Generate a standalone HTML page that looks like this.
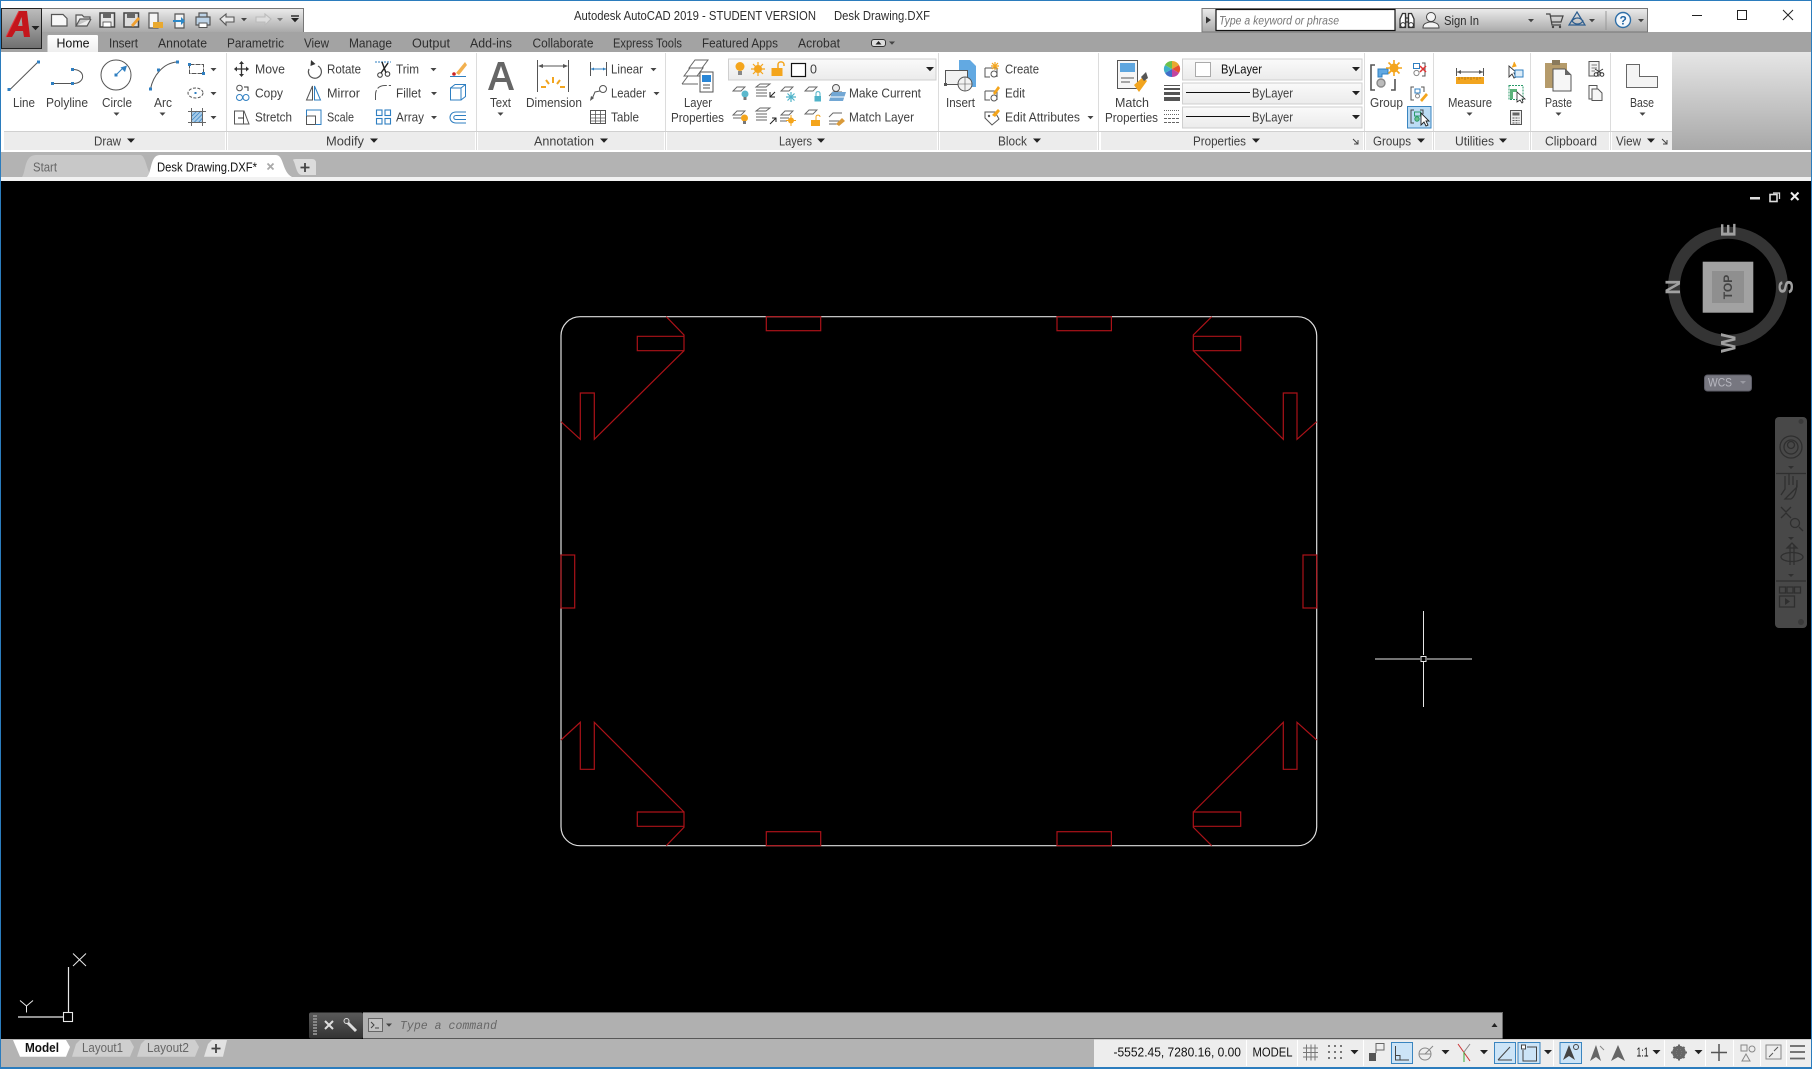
<!DOCTYPE html>
<html><head><meta charset="utf-8"><title>AutoCAD</title>
<style>
html,body{margin:0;padding:0;background:#000;width:1812px;height:1069px;overflow:hidden}
svg{display:block}
text{font-family:"Liberation Sans",sans-serif;font-size:12.5px;fill:#3f3f3f}
.t{fill:#2e2e2e}
.k{fill:#111}
.ic{fill:none;stroke:#555;stroke-width:1.2}
.bl{fill:none;stroke:#2f7fc1;stroke-width:1.2}
</style></head><body>
<svg width="1812" height="1069" viewBox="0 0 1812 1069" xmlns="http://www.w3.org/2000/svg">
<defs>
<linearGradient id="g1" x1="0" y1="0" x2="0" y2="1"><stop offset="0" stop-color="#ececec"/><stop offset="1" stop-color="#a9a9a9"/></linearGradient>
<linearGradient id="g2" x1="0" y1="0" x2="0" y2="1"><stop offset="0" stop-color="#bdbdbd"/><stop offset="1" stop-color="#6f6f6f"/></linearGradient>
<linearGradient id="g3" x1="0" y1="0" x2="0" y2="1"><stop offset="0" stop-color="#ffffff"/><stop offset="1" stop-color="#efefef"/></linearGradient>
<linearGradient id="g4" x1="0" y1="0" x2="0" y2="1"><stop offset="0" stop-color="#e6e6e6"/><stop offset="1" stop-color="#a8a8a8"/></linearGradient>
<linearGradient id="g5" x1="0" y1="0" x2="0" y2="1"><stop offset="0" stop-color="#fafafa"/><stop offset="1" stop-color="#ebebeb"/></linearGradient>
<linearGradient id="g6" x1="0" y1="0" x2="0" y2="1"><stop offset="0" stop-color="#5a5a5a"/><stop offset="1" stop-color="#333"/></linearGradient>
<path id="a" d="M-3 -1.5H3L0 1.7Z" fill="#444"/>
<path id="ab" d="M-4 -2H4L0 2.2Z" fill="#222"/>
</defs>

<!-- base -->
<rect width="1812" height="1069" fill="#000"/>
<rect x="0" y="0" width="1812" height="32" fill="#fff"/>
<rect x="0" y="32" width="1812" height="20" fill="#a3a3a3"/>
<rect x="0" y="52" width="1812" height="100" fill="#fff"/>
<rect x="1672" y="52" width="139" height="98" fill="url(#g4)"/>
<rect x="0" y="152" width="1812" height="25" fill="#b3b3b3"/>
<rect x="0" y="177" width="1812" height="4" fill="#f2f2f2"/>
<rect x="0" y="0" width="1812" height="1" fill="#2b7cbd"/>

<!-- panel title rows -->
<g fill="#ececec">
<rect x="4" y="132" width="221" height="18"/><rect x="228" y="132" width="247" height="18"/>
<rect x="478" y="132" width="186" height="18"/><rect x="667" y="132" width="270" height="18"/>
<rect x="940" y="132" width="157" height="18"/><rect x="1101" y="132" width="262" height="18"/>
<rect x="1366" y="132" width="66" height="18"/><rect x="1435" y="132" width="94" height="18"/>
<rect x="1532" y="132" width="77" height="18"/><rect x="1612" y="132" width="60" height="18"/>
</g>
<g stroke="#dcdcdc" stroke-width="1">
<path d="M226.5 53V150M476.5 53V150M665.5 53V150M938.5 53V150M1098.5 53V150M1364.5 53V150M1433.5 53V150M1530.5 53V150M1610.5 53V150"/>
</g>
<g stroke="#d0d0d0" stroke-width="1"><path d="M4 131.5H1672"/></g>

<!-- App button -->
<rect x="1.5" y="8.5" width="40" height="40" fill="url(#g2)" stroke="#222"/>
<path fill-rule="evenodd" fill="#c4161c" d="M6 37L19 11H27L30 37H24L23 31H15.5L12 37ZM18 26H22.5L21.5 17Z"/>
<path d="M6 37L19 11" stroke="#e23a40" stroke-width="1" fill="none"/>
<use href="#ab" x="35.5" y="28"/>

<!-- QAT -->
<path d="M42 8.5H303V32H42Z" fill="url(#g1)"/>
<path d="M42 8.5H303.5V32" fill="none" stroke="#777"/>
<g class="ic">
<path d="M51.5 14.5H63L67 18.5V26H51.5Z" fill="#f8f8f8"/>
<path d="M76 26V15H82L84 17H90V19H80L76 26H87L91 19" fill="#eee"/>
</g>
<path d="M100 13H114.5V27H100Z" fill="#e8e8e8" stroke="#444" stroke-width="1.5"/><rect x="103" y="13" width="8" height="5" fill="#666"/><rect x="103" y="22" width="8" height="5" fill="#fff" stroke="#444" stroke-width=".8"/>
<path d="M124 13H138.5V27H124Z" fill="#ddd" stroke="#444" stroke-width="1.5"/><rect x="127" y="13" width="8" height="5" fill="#666"/><path d="M131 25L138 17L140 19L133 27Z" fill="#f0a030"/>
<path d="M149 13H158V28H149Z" fill="#f4f4f4" stroke="#555" stroke-width="1.2"/><rect x="153" y="22" width="10" height="6" fill="#e9a92f"/>
<path d="M175 14H184V28H175Z" fill="#f4f4f4" stroke="#555" stroke-width="1.2"/><path d="M173 20H181V17L185 21L181 25V22H173Z" fill="#2b88c8"/>
<path d="M199 13H207V17H199ZM196 17H210V25H196Z" fill="#bcd2e6" stroke="#555" stroke-width="1.2"/><rect x="199" y="23" width="8" height="4.5" fill="#fff" stroke="#555"/>
<path d="M220 19L226 14V17H234V22H226V25Z" fill="#e8e8e8" stroke="#555" stroke-width="1.1"/>
<use href="#a" x="244" y="19.5"/>
<path d="M271 19L265 14V17H256V22H265V25Z" fill="#ddd" stroke="#bbb" stroke-width="1.1"/>
<use href="#a" x="280" y="19.5" opacity=".6"/>
<path d="M291 16H299" stroke="#333" stroke-width="1.5"/><use href="#ab" x="295" y="20"/>

<!-- Title -->
<text x="574" y="20" textLength="242" lengthAdjust="spacingAndGlyphs" class="t">Autodesk AutoCAD 2019 - STUDENT VERSION</text>
<text x="834" y="20" textLength="96" lengthAdjust="spacingAndGlyphs" class="t">Desk Drawing.DXF</text>

<!-- Search/InfoCenter -->
<path d="M1202 8.5H1647.5V32H1202Z" fill="url(#g1)" stroke="#777"/>
<path d="M1206 16.5L1211 20L1206 23.5Z" fill="#333"/>
<rect x="1216" y="9.5" width="179" height="21" fill="#fff" stroke="#111" stroke-width="1.2"/>
<text x="1219" y="24.5" textLength="120" lengthAdjust="spacingAndGlyphs" font-style="italic" style="fill:#777;font-size:12px">Type a keyword or phrase</text>
<path d="M1400 27.5V19L1402.5 13.5H1405.5V27.5ZM1408.5 27.5V13.5H1411.5L1414 19V27.5ZM1405.5 18H1408.5M1405.5 22H1408.5" fill="#fff" stroke="#333" stroke-width="1.3"/>
<circle cx="1403" cy="25" r="2.4" fill="none" stroke="#333"/><circle cx="1411" cy="25" r="2.4" fill="none" stroke="#333"/>
<circle cx="1431" cy="17" r="4.5" fill="#f4f4f4" stroke="#444"/><path d="M1423 28C1423 23 1427 23 1429 22H1433C1435 23 1439 23 1439 28Z" fill="#f4f4f4" stroke="#444"/>
<text x="1444" y="25" textLength="35" lengthAdjust="spacingAndGlyphs" class="t">Sign In</text>
<use href="#a" x="1531" y="20.5"/>
<path d="M1546 14H1550L1552 25H1561M1550 16H1563L1561 22H1551" fill="none" stroke="#444" stroke-width="1.2"/><circle cx="1553" cy="27" r="1.2" fill="#444"/><circle cx="1560" cy="27" r="1.2" fill="#444"/>
<path d="M1577 12L1585 25H1569Z M1572 21C1575 17 1580 17 1583 21C1580 25 1575 25 1572 21Z" fill="none" stroke="#2c5d8f" stroke-width="1.2"/>
<use href="#a" x="1592" y="20.5"/>
<path d="M1606 11V30" stroke="#999"/>
<circle cx="1623" cy="20" r="7.5" fill="#f4f8fc" stroke="#2f6fa8" stroke-width="1.4"/>
<text x="1619.5" y="24.5" style="font-size:12px;font-weight:bold;fill:#2367a4">?</text>
<use href="#a" x="1641" y="20.5"/>

<!-- Window controls -->
<path d="M1692 15.5H1702" stroke="#222" stroke-width="1"/>
<rect x="1737.5" y="10.5" width="9" height="9" fill="none" stroke="#222"/>
<path d="M1783 10L1793 20M1793 10L1783 20" stroke="#222"/>

<!-- Tabs -->
<path d="M47.5 52V36Q47.5 35 49 35H96.5Q98 35 98 36V52Z" fill="url(#g3)"/>
<text x="56.5" y="47.5" textLength="33" lengthAdjust="spacingAndGlyphs" class="k">Home</text>
<text x="109" y="47.5" textLength="29" lengthAdjust="spacingAndGlyphs" class="t">Insert</text>
<text x="158" y="47.5" textLength="49" lengthAdjust="spacingAndGlyphs" class="t">Annotate</text>
<text x="227" y="47.5" textLength="57" lengthAdjust="spacingAndGlyphs" class="t">Parametric</text>
<text x="304" y="47.5" textLength="25" lengthAdjust="spacingAndGlyphs" class="t">View</text>
<text x="349" y="47.5" textLength="43" lengthAdjust="spacingAndGlyphs" class="t">Manage</text>
<text x="412" y="47.5" textLength="38" lengthAdjust="spacingAndGlyphs" class="t">Output</text>
<text x="470" y="47.5" textLength="42" lengthAdjust="spacingAndGlyphs" class="t">Add-ins</text>
<text x="532.5" y="47.5" textLength="61" lengthAdjust="spacingAndGlyphs" class="t">Collaborate</text>
<text x="613" y="47.5" textLength="69" lengthAdjust="spacingAndGlyphs" class="t">Express Tools</text>
<text x="702" y="47.5" textLength="76" lengthAdjust="spacingAndGlyphs" class="t">Featured Apps</text>
<text x="798" y="47.5" textLength="42" lengthAdjust="spacingAndGlyphs" class="t">Acrobat</text>
<rect x="871.5" y="39.5" width="14" height="7" rx="2.5" fill="#ddd" stroke="#333"/><path d="M875.5 44.5L878.5 41L881.5 44.5Z" fill="#222"/>
<use href="#a" x="892" y="43"/>

<!-- DRAW -->
<path d="M9.5 90L38.5 61.5" stroke="#555" stroke-width="1" fill="none"/>
<path d="M53 83.5H72.5M72.5 69.5C86 69 86 84 72.5 83.5" stroke="#555" stroke-width="1" fill="none"/>
<circle cx="116" cy="75" r="15" fill="none" stroke="#555" stroke-width="1"/>
<path d="M116 75L124 67" stroke="#2f7fc1" stroke-width="1.1"/><path d="M127 65.5L120.5 67.5L125 72Z" fill="#2f7fc1"/>
<path d="M150.5 89C153 76 163 63 177 62" stroke="#555" stroke-width="1" fill="none"/>
<g fill="#2f7fc1">
<rect x="7.5" y="88" width="3" height="3"/><rect x="37" y="60.5" width="3" height="3"/>
<rect x="51" y="82" width="3" height="3"/><rect x="71" y="82" width="3" height="3"/><rect x="71" y="68" width="3" height="3"/>
<rect x="114.5" y="73.5" width="3" height="3"/>
<rect x="149" y="87.5" width="3" height="3"/><rect x="157" y="68.5" width="3" height="3"/><rect x="176" y="60.5" width="3" height="3"/>
</g>
<rect x="189.5" y="64.5" width="14" height="9" fill="none" stroke="#555" stroke-dasharray="5 1"/><g fill="#2f7fc1"><rect x="188" y="63" width="3" height="3"/><rect x="202" y="72" width="3" height="3"/></g>
<ellipse cx="195.5" cy="93" rx="7.5" ry="5" fill="none" stroke="#555" stroke-dasharray="3 1.5"/><rect x="194.5" y="92" width="2" height="2" fill="#2f7fc1"/>
<rect x="191.5" y="111.5" width="11" height="11" fill="#a7cbe8"/><path d="M192 116L197 111M192 120L201 111M194 122.5L202.5 114M198.5 122.5L202.5 118" stroke="#3c86c4" stroke-width=".8"/><path d="M188 111.5H206M188 122.5H206M191.5 108V126M202.5 108V126" stroke="#666" stroke-width="1"/>
<use href="#a" x="213.5" y="69.5"/><use href="#a" x="213.5" y="93.5"/><use href="#a" x="213.5" y="117.5"/>
<text x="13" y="107" textLength="22" lengthAdjust="spacingAndGlyphs">Line</text>
<text x="46" y="107" textLength="42" lengthAdjust="spacingAndGlyphs">Polyline</text>
<text x="102" y="107" textLength="30" lengthAdjust="spacingAndGlyphs">Circle</text>
<text x="154" y="107" textLength="18" lengthAdjust="spacingAndGlyphs">Arc</text>
<use href="#a" x="116.5" y="114"/><use href="#a" x="162.5" y="114"/>
<text x="94" y="145.5" textLength="27" lengthAdjust="spacingAndGlyphs">Draw</text><use href="#ab" x="131" y="140.5"/>

<!-- MODIFY -->
<path d="M241.5 62V76M234.5 69H248.5" stroke="#333" stroke-width="1.3"/><path d="M241.5 61L239 64H244ZM241.5 77L239 74H244ZM234 69L237 66.5V71.5ZM249 69L246 66.5V71.5Z" fill="#333"/>
<circle cx="239.5" cy="88" r="2.8" fill="none" stroke="#555"/><circle cx="239.5" cy="97.5" r="3" fill="none" stroke="#2f7fc1"/><circle cx="246" cy="97.5" r="3" fill="none" stroke="#2f7fc1"/><path d="M244 87H248V91" stroke="#333" fill="none"/>
<path d="M234.5 111H244L249 124H234.5ZM243.5 111V124" fill="none" stroke="#555"/><path d="M238 118H244" stroke="#333"/>
<path d="M318 66A6.5 6.5 0 1 1 309 69" fill="none" stroke="#555" stroke-width="1.2"/><path d="M311 60L315.5 64L310.5 66Z" fill="#333"/>
<path d="M314.5 86L320.5 100H314.5Z" fill="none" stroke="#2f7fc1"/><path d="M312.5 86L306.5 100H312.5Z" fill="none" stroke="#555"/>
<rect x="306.5" y="116" width="9" height="8.5" fill="none" stroke="#555"/><path d="M306.5 116V110H321V124.5H315.5" fill="none" stroke="#2f7fc1"/>
<path d="M375 62H391" stroke="#2f7fc1" stroke-dasharray="2 1"/><path d="M382 62L386 73M388 63L381 73" stroke="#222" stroke-width="1.4"/><circle cx="380" cy="75" r="2.3" fill="none" stroke="#333"/><circle cx="387.5" cy="74" r="2.3" fill="none" stroke="#333"/>
<path d="M375.5 100V94C376 88 380 85.5 385 85.5H391" fill="none" stroke="#555" stroke-dasharray="10 2"/>
<g fill="none" stroke="#2f7fc1" stroke-width="1.1"><rect x="376.5" y="110" width="5.5" height="5.5"/><rect x="385" y="110" width="5.5" height="5.5"/><rect x="376.5" y="118.5" width="5.5" height="5.5"/><rect x="385" y="118.5" width="5.5" height="5.5"/></g>
<use href="#a" x="433.5" y="69.5"/><use href="#a" x="434" y="93.5"/><use href="#a" x="434" y="117.5"/>
<path d="M456 73L465 62L467 65L459 75Z" fill="#f2b04f"/><path d="M450 76.5H466" stroke="#2f7fc1"/><circle cx="454" cy="74" r="1.8" fill="#c22"/>
<path d="M450.5 88H461V100H450.5ZM450.5 88L455 84.5H465.5V96.5L461 100M461 88L465.5 84.5" fill="none" stroke="#2f7fc1"/>
<path d="M466 112H456C448 112 448 123 456 123H466M466 115.5H456C453 115.5 453 119.5 456 119.5H466" fill="none" stroke="#2f7fc1"/>
<text x="255" y="73.5" textLength="30" lengthAdjust="spacingAndGlyphs">Move</text>
<text x="255" y="97.5" textLength="28" lengthAdjust="spacingAndGlyphs">Copy</text>
<text x="255" y="121.5" textLength="37" lengthAdjust="spacingAndGlyphs">Stretch</text>
<text x="327" y="73.5" textLength="34" lengthAdjust="spacingAndGlyphs">Rotate</text>
<text x="327" y="97.5" textLength="33" lengthAdjust="spacingAndGlyphs">Mirror</text>
<text x="327" y="121.5" textLength="27" lengthAdjust="spacingAndGlyphs">Scale</text>
<text x="396" y="73.5" textLength="23" lengthAdjust="spacingAndGlyphs">Trim</text>
<text x="396" y="97.5" textLength="25" lengthAdjust="spacingAndGlyphs">Fillet</text>
<text x="396" y="121.5" textLength="28" lengthAdjust="spacingAndGlyphs">Array</text>
<text x="326" y="145.5" textLength="38" lengthAdjust="spacingAndGlyphs">Modify</text><use href="#ab" x="374" y="140.5"/>

<!-- ANNOTATION -->
<path fill-rule="evenodd" fill="#666" d="M498 62H504L514 90H509L506.5 82H495.5L493 90H488ZM497 78H505L501 66Z"/>
<text x="490" y="107" textLength="21" lengthAdjust="spacingAndGlyphs">Text</text><use href="#a" x="500.5" y="114"/>
<path d="M537.5 60V92M568.5 60V92" stroke="#555"/><path d="M539 66H567" stroke="#555"/><path d="M538 66L543 64V68ZM568 66L563 64V68Z" fill="#555"/>
<g stroke="#f2a51f" stroke-width="2"><path d="M553 77V83M546 80L549 84M560 80L557 84M541 87H546M560 87H565"/></g>
<text x="526" y="107" textLength="56" lengthAdjust="spacingAndGlyphs">Dimension</text>
<path d="M590.5 62V76M606.5 62V76" stroke="#555"/><path d="M591 69H606" stroke="#2f7fc1"/><path d="M591 69L594 67.5V70.5ZM606 69L603 67.5V70.5Z" fill="#2f7fc1"/>
<circle cx="603" cy="89" r="3.5" fill="none" stroke="#555"/><path d="M600 91L595 92L592 99" fill="none" stroke="#555"/><path d="M590 101L594 98L591 96Z" fill="#555"/>
<rect x="590.5" y="110.5" width="15" height="13" fill="none" stroke="#555"/><path d="M590.5 114.5H605.5M590.5 118H605.5M590.5 121H605.5M595.5 110.5V123.5M600.5 110.5V123.5" stroke="#555" stroke-width=".8"/>
<text x="611" y="73.5" textLength="32" lengthAdjust="spacingAndGlyphs">Linear</text>
<text x="611" y="97.5" textLength="35" lengthAdjust="spacingAndGlyphs">Leader</text>
<text x="611" y="121.5" textLength="28" lengthAdjust="spacingAndGlyphs">Table</text>
<use href="#a" x="653.5" y="69.5"/><use href="#a" x="656.5" y="93.5"/>
<text x="534" y="145.5" textLength="60" lengthAdjust="spacingAndGlyphs">Annotation</text><use href="#ab" x="604" y="140.5"/>

<!-- LAYERS -->
<g fill="none" stroke="#666"><path d="M689 68L695 60H708L702 68Z"/><path d="M684 76L690 68H703L697 76ZM682 84L688 76H701"/><path d="M682 84H698"/></g>
<rect x="700" y="72" width="13" height="20" fill="#fff" stroke="#555"/><rect x="702" y="75" width="9" height="7" fill="#2a86d6"/><path d="M703 85H710M703 88H710" stroke="#555"/>
<text x="684" y="107" textLength="28" lengthAdjust="spacingAndGlyphs">Layer</text>
<text x="671" y="122" textLength="53" lengthAdjust="spacingAndGlyphs">Properties</text>
<rect x="728.5" y="59" width="207.5" height="21" fill="url(#g5)" stroke="#cfcfcf"/>
<circle cx="740" cy="66.5" r="4.5" fill="#f4a51c"/><rect x="738" y="71" width="4" height="4" fill="#888"/>
<circle cx="758" cy="69" r="4" fill="#f4a51c"/><g stroke="#f4a51c" stroke-width="1.2"><path d="M758 62V76M751 69H765M753 64L763 74M763 64L753 74"/></g>
<rect x="771.5" y="68" width="11" height="8" fill="#f4a51c"/><path d="M778 68V64.5C778 61 784 61 784 64.5V66" fill="none" stroke="#f4a51c" stroke-width="1.5"/>
<rect x="791.5" y="63.5" width="14" height="13" fill="#fff" stroke="#111" stroke-width="1.2"/>
<text x="810" y="73.5" textLength="6">0</text>
<use href="#ab" x="930" y="69"/>
<g fill="none" stroke="#666" stroke-width=".9">
<path d="M733 91L737 87H745L741 91Z"/><path d="M756 87L760 84H770L766 87ZM756 90H767M756 93H767M756 96H767"/>
<path d="M781 91L785 87H793L789 91Z"/><path d="M805 91L809 87H817L813 91Z"/>
<path d="M829 96L833 92H842"/>
<path d="M733 115L737 111H745L741 115ZM733 118H742"/><path d="M756 111L760 108H770L766 111ZM756 114H767M756 117H767M756 120H767"/>
<path d="M781 115L785 111H793L789 115ZM780 118H789M780 121H787"/><path d="M805 114L809 110H817L813 114Z"/>
<path d="M829 117L833 113H842M829 121H843M829 124H841"/>
</g>
<circle cx="745" cy="94" r="3.5" fill="#5cb8cc"/><rect x="743.5" y="97" width="3" height="3" fill="#777"/>
<path d="M770 97L775 92M770 92V97H775" stroke="#222" fill="none"/>
<g stroke="#4fb3c9" stroke-width="1.2"><path d="M791 92V102M786 97H796M787.5 93.5L794.5 100.5M794.5 93.5L787.5 100.5"/></g>
<rect x="814.5" y="96" width="6.5" height="5.5" fill="#4fb3c9"/><path d="M816 96V93.5C816 91 820 91 820 93.5V96" fill="none" stroke="#4fb3c9"/>
<path d="M829 101H843L846 92H832Z" fill="#72a7d4"/><path d="M829 97H845" stroke="#fff"/><circle cx="836" cy="88" r="3.5" fill="#eee" stroke="#555"/>
<circle cx="744.5" cy="118" r="3.5" fill="#f4a51c"/><rect x="743" y="121" width="3" height="3" fill="#777"/>
<path d="M770 124L776 118M772 118H776V122" stroke="#222" fill="none"/>
<circle cx="791" cy="120.5" r="3" fill="#f4a51c"/><g stroke="#f4a51c"><path d="M791 115V126M786 120.5H796"/></g>
<rect x="811" y="120" width="9" height="6" fill="#f4a51c"/><path d="M816 120V117C816 114.5 820 114.5 820 117" fill="none" stroke="#f4a51c"/>
<path d="M836 124L842 118L845 121L839 126Z" fill="#d99a3a"/>
<text x="849" y="97.5" textLength="72" lengthAdjust="spacingAndGlyphs">Make Current</text>
<text x="849" y="121.5" textLength="65" lengthAdjust="spacingAndGlyphs">Match Layer</text>
<text x="779" y="145.5" textLength="33" lengthAdjust="spacingAndGlyphs">Layers</text><use href="#ab" x="821" y="140.5"/>

<!-- BLOCK -->
<path d="M959 60H970L976 66V87H959Z" fill="#62a9e2"/>
<rect x="945.5" y="70.5" width="22" height="14" fill="#f2f2f2" stroke="#555"/>
<circle cx="965" cy="84" r="7" fill="#f2f2f2" stroke="#555"/><path d="M965 77V91M958 84H972" stroke="#555" stroke-width=".6"/><rect x="944" y="83" width="3" height="3" fill="#555"/>
<path d="M985 68H997V77M985 68V77H990" fill="none" stroke="#555"/><circle cx="994" cy="74" r="3" fill="none" stroke="#555"/>
<g stroke="#f4a51c" stroke-width="1.2"><path d="M995 62V70M991 66H999M992 63L998 69M998 63L992 69"/></g>
<path d="M985 91H997V100M985 91V100H990" fill="none" stroke="#555"/><circle cx="994" cy="98" r="3" fill="none" stroke="#555"/><path d="M993 93L998 86L1000 88L995 95Z" fill="#f4a51c"/>
<path d="M985 112H995L999 119L992 125L985 118Z" fill="none" stroke="#555"/><circle cx="989" cy="116" r="1.2" fill="#555"/><path d="M992 115L998 109L1000 111L995 117Z" fill="#f4a51c"/>
<text x="946" y="107" textLength="29" lengthAdjust="spacingAndGlyphs">Insert</text>
<text x="1005" y="73.5" textLength="34" lengthAdjust="spacingAndGlyphs">Create</text>
<text x="1005" y="97.5" textLength="20" lengthAdjust="spacingAndGlyphs">Edit</text>
<text x="1005" y="121.5" textLength="75" lengthAdjust="spacingAndGlyphs">Edit Attributes</text>
<use href="#a" x="1090.5" y="117.5"/>
<text x="998" y="145.5" textLength="29" lengthAdjust="spacingAndGlyphs">Block</text><use href="#ab" x="1037" y="140.5"/>

<!-- PROPERTIES -->
<rect x="1117.5" y="60.5" width="20" height="28" fill="#f6f6f6" stroke="#555"/><rect x="1120" y="63" width="15" height="9" fill="#5ea6df"/><path d="M1121 78H1134M1121 82H1130" stroke="#555"/>
<path d="M1134 85L1143 77L1147 81L1139 92Z" fill="#f2a51f"/><path d="M1141 77L1146 72L1148 78L1144 81Z" fill="#555"/>
<text x="1115" y="107" textLength="34" lengthAdjust="spacingAndGlyphs">Match</text>
<text x="1105" y="122" textLength="53" lengthAdjust="spacingAndGlyphs">Properties</text>
<path d="M1172 69V61A8 8 0 0 1 1179 65Z" fill="#e9a92f"/><path d="M1172 69L1179 65A8 8 0 0 1 1179 73Z" fill="#e5502f"/><path d="M1172 69L1179 73A8 8 0 0 1 1172 77Z" fill="#c244a0"/><path d="M1172 69V77A8 8 0 0 1 1165 73Z" fill="#3f6ec8"/><path d="M1172 69L1165 73A8 8 0 0 1 1165 65Z" fill="#3fb0c8"/><path d="M1172 69L1165 65A8 8 0 0 1 1172 61Z" fill="#6cc04a"/>
<g fill="#555"><rect x="1164" y="85" width="16" height="1"/><rect x="1164" y="88" width="16" height="2"/><rect x="1164" y="92" width="16" height="3"/><rect x="1164" y="97" width="16" height="4"/></g>
<g stroke="#666" stroke-dasharray="1 1"><path d="M1164 110.5H1180M1164 114.5H1180"/></g><g stroke="#666" stroke-dasharray="3 1"><path d="M1164 118.5H1180M1164 122.5H1180"/></g>
<rect x="1182.5" y="59" width="179.5" height="21" fill="url(#g5)" stroke="#cfcfcf"/>
<rect x="1182.5" y="83" width="179.5" height="21" fill="url(#g5)" stroke="#cfcfcf"/>
<rect x="1182.5" y="107" width="179.5" height="21" fill="url(#g5)" stroke="#cfcfcf"/>
<rect x="1195.5" y="62.5" width="15" height="14" fill="#fff" stroke="#aaa"/>
<text x="1221" y="73.5" textLength="41" lengthAdjust="spacingAndGlyphs" class="k">ByLayer</text>
<path d="M1186 92.5H1250M1186 116.5H1250" stroke="#111" stroke-width="1"/>
<text x="1252" y="97.5" textLength="41" lengthAdjust="spacingAndGlyphs">ByLayer</text>
<text x="1252" y="121.5" textLength="41" lengthAdjust="spacingAndGlyphs">ByLayer</text>
<use href="#ab" x="1356" y="69"/><use href="#ab" x="1356" y="93"/><use href="#ab" x="1356" y="117"/>
<text x="1193" y="145.5" textLength="53" lengthAdjust="spacingAndGlyphs">Properties</text><use href="#ab" x="1256" y="140.5"/>
<path d="M1353 139L1358 144M1358 140V144H1354" stroke="#444" fill="none"/>

<!-- GROUPS -->
<path d="M1375 65H1371V90H1375M1391 90H1395V79" fill="none" stroke="#555" stroke-width="1.6"/>
<path d="M1378 69H1388V74H1382V77H1378Z" fill="#62a9e2" stroke="#2f7fc1"/><circle cx="1381" cy="83" r="4" fill="#bbb" stroke="#888" stroke-width="1.4"/>
<g stroke="#f4a51c" stroke-width="1.6"><path d="M1394 60V76M1386 68H1402M1388.5 62.5L1399.5 73.5M1399.5 62.5L1388.5 73.5"/></g><circle cx="1394" cy="68" r="4.5" fill="#f4a51c"/>
<text x="1370" y="107" textLength="33" lengthAdjust="spacingAndGlyphs">Group</text>
<rect x="1413.5" y="63.5" width="6" height="5" fill="none" stroke="#2f7fc1"/><circle cx="1416.5" cy="73" r="2.6" fill="none" stroke="#888"/><path d="M1422 63H1425V76H1422" fill="none" stroke="#555"/><path d="M1420 66L1426 72M1426 66L1420 72" stroke="#d33" stroke-width="1.5"/>
<path d="M1414 87H1411V100H1414M1421 87H1424V92" fill="none" stroke="#555"/><rect x="1415" y="89" width="5" height="4" fill="none" stroke="#2f7fc1"/><circle cx="1417.5" cy="96" r="2" fill="none" stroke="#888"/><path d="M1420 100L1426 93L1428 95L1422 102Z" fill="#f4a51c"/>
<rect x="1407.5" y="106.5" width="23.5" height="21.5" fill="#bcdcf4" stroke="#3a85c0"/>
<path d="M1414 110H1411V123H1414M1420 110H1423V114" fill="none" stroke="#444"/><rect x="1414.5" y="112" width="6" height="4" fill="none" stroke="#2b9a6a"/><circle cx="1417" cy="119" r="2.2" fill="#6cc08a" stroke="#2b9a6a"/>
<path d="M1421 113V125L1424 122L1426 126L1428 125L1426 121L1429 121Z" fill="#fff" stroke="#222" stroke-width=".9"/>
<text x="1373" y="145.5" textLength="38" lengthAdjust="spacingAndGlyphs">Groups</text><use href="#ab" x="1421" y="140.5"/>

<!-- UTILITIES -->
<path d="M1456.5 68V76M1483.5 68V76M1457 72H1483" stroke="#555"/><path d="M1457 72L1461 70V74ZM1483 72L1479 70V74Z" fill="#555"/>
<rect x="1456" y="77" width="28" height="7" fill="#f2a51f"/><path d="M1459 77V80M1462 77V79M1465 77V80M1468 77V79M1471 77V80M1474 77V79M1477 77V80M1480 77V79" stroke="#a06a10" stroke-width=".7"/>
<text x="1448" y="107" textLength="44" lengthAdjust="spacingAndGlyphs">Measure</text><use href="#a" x="1469.5" y="114"/>
<path d="M1509 66V77L1512 74L1514 78L1516 77L1514 73H1517Z" fill="#fff" stroke="#333" stroke-width=".9"/><rect x="1515" y="70" width="8" height="7" fill="#dcecf8" stroke="#2f7fc1"/><path d="M1514 62L1516 66L1512 67" fill="#f4a51c" stroke="#f4a51c"/>
<rect x="1509" y="85.5" width="14" height="14" fill="#fff" stroke="#2b9a6a" stroke-dasharray="2 1"/><path d="M1510 99V89H1517V92H1513V99Z" fill="#5bb37a"/><path d="M1517 92V102L1520 100L1522 103L1523 102L1522 99L1525 99Z" fill="#fff" stroke="#222" stroke-width=".8"/>
<rect x="1510.5" y="110.5" width="11" height="14" fill="#eee" stroke="#555"/><rect x="1512.5" y="112.5" width="7" height="3" fill="#666"/><path d="M1512.5 118H1519.5M1512.5 120.5H1519.5M1512.5 123H1519.5" stroke="#555" stroke-dasharray="2 1"/>
<text x="1455" y="145.5" textLength="39" lengthAdjust="spacingAndGlyphs">Utilities</text><use href="#ab" x="1503" y="140.5"/>

<!-- CLIPBOARD -->
<rect x="1545" y="63" width="22" height="25" fill="#b59b6b"/><rect x="1552" y="60" width="8" height="5" fill="#8a7a5c"/>
<path d="M1553 69H1565L1571 75V91H1553Z" fill="#f6f6f6" stroke="#555"/><path d="M1565 69V75H1571Z" fill="#666"/>
<text x="1545" y="107" textLength="27" lengthAdjust="spacingAndGlyphs">Paste</text><use href="#a" x="1558.5" y="114"/>
<path d="M1589 61.5H1599V76H1589Z" fill="#f4f4f4" stroke="#555"/><path d="M1591.5 65H1597M1591.5 68H1597M1591.5 71H1595" stroke="#555" stroke-width=".8"/>
<path d="M1595 69L1603 74M1603 69L1595 74" stroke="#333"/><circle cx="1596" cy="74.5" r="1.8" fill="#fff" stroke="#333"/><circle cx="1602" cy="74.5" r="1.8" fill="#fff" stroke="#333"/>
<path d="M1589 85.5H1597V99H1589Z" fill="none" stroke="#555"/><path d="M1592 89H1598L1602 93V100.5H1592Z" fill="#f6f6f6" stroke="#555"/>
<text x="1545" y="145.5" textLength="52" lengthAdjust="spacingAndGlyphs">Clipboard</text>

<!-- VIEW -->
<path d="M1626.5 64.5H1639.5V76.5H1657.5V87.5H1626.5Z" fill="#f4f4f4" stroke="#666"/>
<text x="1630" y="107" textLength="24" lengthAdjust="spacingAndGlyphs">Base</text><use href="#a" x="1642.5" y="114"/>
<text x="1616" y="145.5" textLength="25" lengthAdjust="spacingAndGlyphs">View</text><use href="#ab" x="1651" y="140.5"/>
<path d="M1662 139L1667 144M1667 140V144H1663" stroke="#444" fill="none"/>

<!-- DOC TABS -->
<path d="M22 177C26 172 24 155 36 155H140C146 155 146 170 152 177Z" fill="#c8c8c8"/>
<path d="M147 177C152 172 150 155 160 155H276C284 155 282 172 292 177Z" fill="#fff"/>
<path d="M293 160Q293 159 296 159H312Q316 159 316 163V175H302C296 175 296 164 293 160Z" fill="#dcdcdc"/>
<text x="33" y="171.5" textLength="24" lengthAdjust="spacingAndGlyphs" style="fill:#666">Start</text>
<text x="157" y="171.5" textLength="100" lengthAdjust="spacingAndGlyphs" class="k">Desk Drawing.DXF*</text>
<path d="M267.5 163.5L273.5 169.5M273.5 163.5L267.5 169.5" stroke="#aaa" stroke-width="1.8"/>
<path d="M305 163V172M300.5 167.5H309.5" stroke="#444" stroke-width="1.8"/>

<!-- DRAWING -->
<rect x="561" y="316.7" width="755.7" height="529" rx="19" ry="19" fill="none" stroke="#dedede" stroke-width="1.2"/>
<g fill="none" stroke="#ab1218" stroke-width="1.2">
<path d="M666.3 316.7L684 335V350.7H637.3V336.3H684M684 350.7L594.3 439.3V393H580.3V439.3L561 421.7"/>
<path d="M1211.7 316.7L1193.3 335V350.7H1240.7V336.3H1193.3M1193.3 350.7L1283.3 439.3V393H1297V439.3L1316.7 421.7"/>
<path d="M666.3 845.7L684 827.3V812H637.3V826.3H684M684 812L594.3 722.3V769.3H580.3V722.3L561 740"/>
<path d="M1211.7 845.7L1193.3 827.3V812H1240.7V826.3H1193.3M1193.3 812L1283.3 722.3V769.3H1297V722.3L1316.7 740"/>
<rect x="766.3" y="316.7" width="54.4" height="14"/><rect x="1057" y="316.7" width="54.4" height="14"/>
<rect x="766.3" y="831.7" width="54.4" height="14"/><rect x="1057" y="831.7" width="54.4" height="14"/>
<rect x="561" y="555" width="13.7" height="53"/><rect x="1303" y="555" width="13.7" height="53"/>
</g>

<!-- Crosshair -->
<path d="M1375 659H1420M1427 659H1472M1423.5 611V655M1423.5 662V707" stroke="#e6e6e6" stroke-width="1"/>
<rect x="1421" y="656.5" width="5" height="5" fill="none" stroke="#e6e6e6"/>

<!-- Viewport controls -->
<rect x="1750" y="197" width="10" height="2.5" fill="#ddd"/>
<rect x="1770" y="194.5" width="7" height="7" fill="none" stroke="#ddd" stroke-width="1.6"/><path d="M1773 193H1779.5V199" fill="none" stroke="#ddd" stroke-width="1.3"/>
<path d="M1791 192.5L1798.5 200M1798.5 192.5L1791 200" stroke="#eee" stroke-width="2"/>

<!-- ViewCube -->
<circle cx="1728" cy="286.7" r="54" fill="none" stroke="#343434" stroke-width="12"/>
<rect x="1702.7" y="261.7" width="50.6" height="51" fill="#a2a2a2"/>
<rect x="1712" y="271" width="32" height="32" fill="#8f8f8f"/>
<g text-anchor="middle">
<text x="0" y="0" transform="translate(1732 287) rotate(-90)" style="font-size:12px;font-weight:bold;fill:#444">TOP</text>
<text x="0" y="0" transform="translate(1735.5 230) rotate(-90)" style="font-size:21px;font-weight:bold;fill:#a0a0a0">E</text>
<text x="0" y="0" transform="translate(1680 287) rotate(-90)" style="font-size:21px;font-weight:bold;fill:#a0a0a0">N</text>
<text x="0" y="0" transform="translate(1793 287) rotate(-90)" style="font-size:21px;font-weight:bold;fill:#a0a0a0">S</text>
<text x="0" y="0" transform="translate(1735.5 343) rotate(-90)" style="font-size:21px;font-weight:bold;fill:#a0a0a0">W</text>
</g>
<rect x="1704.5" y="375" width="47" height="16" rx="3" fill="#777780" stroke="#5c5c66"/>
<text x="1708" y="386.3" textLength="24" lengthAdjust="spacingAndGlyphs" style="fill:#b8b8c0;font-size:11.5px">WCS</text>
<path d="M1740 381H1746L1743 384Z" fill="#9a9aa2"/>

<!-- Nav bar -->
<rect x="1775" y="417" width="32" height="211" rx="4" fill="#484848"/>
<g fill="none" stroke="#2f2f2f" stroke-width="1.3">
<circle cx="1791" cy="447" r="11"/><circle cx="1791" cy="447" r="7"/><circle cx="1791" cy="445" r="3.5"/>
<path d="M1776 473.5H1806M1776 581H1806"/>
<path d="M1781 495L1785 489V479M1785 486V476M1789 485V474M1793 485V476M1797 487V480C1797 488 1796 496 1791 499H1785Z"/>
<path d="M1781 507L1786 512M1791 507L1786 512M1781 518L1786 513L1791 518"/>
<circle cx="1795" cy="523" r="4.5"/><path d="M1799 527L1803 531"/>
<path d="M1790 545V565M1794 545V565"/><path d="M1792 543L1787 548H1797Z"/>
<ellipse cx="1792" cy="557" rx="11" ry="4.5"/>
<rect x="1779.5" y="587" width="6" height="6"/><rect x="1787" y="587" width="6" height="6"/><rect x="1794.5" y="587" width="6" height="6"/>
<rect x="1779.5" y="596" width="15" height="11"/>
</g>
<path d="M1785 598V605L1790 601.5Z" fill="#2f2f2f"/>
<path d="M1788 466H1794L1791 469Z" fill="#2f2f2f"/><path d="M1788 537H1794L1791 540Z" fill="#2f2f2f"/><path d="M1788 574H1794L1791 577Z" fill="#2f2f2f"/>
<circle cx="1801" cy="421.5" r="2.5" fill="#3a3a3a"/><circle cx="1801" cy="622" r="3" fill="#3a3a3a"/>

<!-- UCS -->
<path d="M68.5 967V1012M18 1017H63.5" stroke="#e8e8e8" stroke-width="1.2"/>
<rect x="63.5" y="1012.5" width="9" height="9" fill="none" stroke="#e8e8e8" stroke-width="1.1"/>
<path d="M73 953.5L86 966M86 953.5L73 966" stroke="#e8e8e8"/>
<path d="M20 1000.5L26.5 1006L33 1000.5M26.5 1006V1012.5" stroke="#e8e8e8" fill="none"/>

<!-- Command line -->
<rect x="309" y="1012.5" width="54" height="26" rx="2" fill="url(#g6)"/>
<rect x="363" y="1012.5" width="1139.5" height="26" fill="#b0b0b0"/>
<path d="M363 1012.5H1502.5V1038.5" fill="none" stroke="#6a6a6a"/>
<path d="M315 1015V1036" stroke="#888" stroke-width="4" stroke-dasharray="2 1"/>
<path d="M325 1021L333 1029M333 1021L325 1029" stroke="#ddd" stroke-width="2"/>
<path d="M345 1020L352 1027L356 1031" stroke="#ddd" stroke-width="3"/><circle cx="346.5" cy="1021" r="2.5" fill="#555" stroke="#ddd"/>
<rect x="368.5" y="1018.5" width="14" height="13" fill="#c2c2c2" stroke="#666"/><path d="M371 1022L374 1025L371 1028M375 1028H379" stroke="#444" fill="none"/>
<use href="#a" x="389" y="1025"/>
<text x="400" y="1029" textLength="97" style="font-family:'Liberation Mono',monospace;font-style:italic;font-size:11.5px;fill:#666" lengthAdjust="spacing">Type a command</text>
<path d="M1491.5 1027H1497.5L1494.5 1023Z" fill="#222"/>

<!-- Bottom strip -->
<rect x="0" y="1039" width="1812" height="28" fill="#b3b3b3"/>
<rect x="0" y="1067" width="1812" height="2" fill="#2b7cbd"/>
<path d="M13 1040H66L70 1047L66 1056.7H20Z" fill="#fff"/>
<text x="25" y="1052" textLength="34" lengthAdjust="spacingAndGlyphs" style="font-weight:bold;fill:#111">Model</text>
<path d="M72 1056.7L76 1044L80 1040H130L134 1047L130 1056.7Z" fill="#cfcfcf"/>
<text x="82" y="1052" textLength="41" lengthAdjust="spacingAndGlyphs" style="fill:#666">Layout1</text>
<path d="M137 1056.7L141 1044L145 1040H195L199 1047L195 1056.7Z" fill="#cfcfcf"/>
<text x="147" y="1052" textLength="42" lengthAdjust="spacingAndGlyphs" style="fill:#666">Layout2</text>
<path d="M204 1056.7L208 1044L212 1040H227L223 1056.7Z" fill="#e2e2e2"/>
<path d="M216 1044V1053M211.5 1048.5H220.5" stroke="#444" stroke-width="1.8"/>

<!-- Status bar -->
<rect x="1094" y="1039.5" width="717" height="27.5" fill="#ededed"/>
<path d="M1246.5 1040V1066M1297.5 1040V1066M1363.5 1040V1066M1553.5 1040V1066M1664.5 1040V1066M1705.5 1040V1066M1733.5 1040V1066M1760.5 1040V1066M1786.5 1040V1066" stroke="#fff"/>
<text x="1113.5" y="1056.5" textLength="127.5" lengthAdjust="spacingAndGlyphs" class="k">-5552.45, 7280.16, 0.00</text>
<text x="1252.5" y="1056.5" textLength="40" lengthAdjust="spacingAndGlyphs" class="k">MODEL</text>
<path d="M1303 1048H1318M1303 1052.5H1318M1303 1057H1318M1306.5 1044.5V1060.5M1311 1044.5V1060.5M1315 1044.5V1060.5" stroke="#777"/>
<g fill="#777"><rect x="1328" y="1045" width="2" height="2"/><rect x="1334" y="1045" width="2" height="2"/><rect x="1340" y="1045" width="2" height="2"/><rect x="1328" y="1051" width="2" height="2"/><rect x="1334" y="1051" width="2" height="2"/><rect x="1340" y="1051" width="2" height="2"/><rect x="1328" y="1057" width="2" height="2"/><rect x="1334" y="1057" width="2" height="2"/><rect x="1340" y="1057" width="2" height="2"/></g>
<use href="#ab" x="1354.5" y="1052"/>
<rect x="1369" y="1053" width="7" height="8" fill="#555"/><path d="M1376 1053V1043.5H1384V1050H1376" fill="none" stroke="#666"/>
<rect x="1391.5" y="1042.5" width="21" height="21" fill="#cce4f7" stroke="#3a85c0"/>
<path d="M1395.5 1046V1060H1409M1395.5 1055.5H1400V1060" fill="none" stroke="#444"/>
<circle cx="1425" cy="1054" r="6" fill="none" stroke="#888"/><path d="M1425 1054L1433 1046M1419 1054H1431" stroke="#888"/>
<use href="#ab" x="1445.5" y="1052"/>
<path d="M1458 1044L1470 1061" stroke="#c33"/><path d="M1470 1044L1464 1052" stroke="#888"/><path d="M1464 1052V1062" stroke="#3a3"/>
<use href="#ab" x="1484" y="1052"/>
<rect x="1494.5" y="1042.5" width="21" height="21" fill="#cce4f7" stroke="#3a85c0"/>
<path d="M1498 1060H1512M1498 1060L1510 1047" fill="none" stroke="#444"/>
<rect x="1518" y="1042.5" width="22" height="21" fill="#cce4f7" stroke="#3a85c0"/>
<rect x="1521.5" y="1045" width="4" height="4" fill="#fff" stroke="#444"/><path d="M1527 1047H1536.5V1061H1523V1050" fill="none" stroke="#444"/>
<use href="#ab" x="1548" y="1052"/>
<rect x="1560" y="1042.5" width="21.5" height="21" fill="#cce4f7" stroke="#3a85c0"/>
<path d="M1569 1045L1575 1060L1569 1056L1563 1060Z" fill="#444"/><circle cx="1576" cy="1047" r="2.5" fill="none" stroke="#444"/>
<path d="M1596 1045L1601 1061L1596 1057L1590 1061Z" fill="#666"/><path d="M1600 1046L1604 1050" stroke="#888"/>
<path d="M1618 1045L1625 1061L1618 1057L1611 1061Z" fill="#666"/>
<text x="1636.5" y="1056.5" textLength="12" lengthAdjust="spacingAndGlyphs" class="k">1:1</text>
<use href="#ab" x="1656.5" y="1052"/>
<circle cx="1679" cy="1052.5" r="5" fill="none" stroke="#666" stroke-width="3.5"/><path d="M1679 1044.5V1060.5M1671 1052.5H1687M1673.5 1047L1684.5 1058M1684.5 1047L1673.5 1058" stroke="#666" stroke-width="2"/>
<use href="#ab" x="1698.5" y="1052"/>
<path d="M1719 1044V1061M1711 1052.5H1727" stroke="#555" stroke-width="1.5"/>
<rect x="1741" y="1045" width="6" height="6" fill="none" stroke="#888"/><circle cx="1752" cy="1049" r="3" fill="none" stroke="#888"/><path d="M1746 1054L1750 1061H1742Z" fill="none" stroke="#888"/>
<rect x="1766" y="1045" width="15" height="14" fill="none" stroke="#888"/><path d="M1769 1057L1773 1053M1778 1047L1774 1051" stroke="#555"/>
<path d="M1790 1046H1805M1790 1052H1805M1790 1058.5H1805" stroke="#666" stroke-width="1.8"/>

<!-- window borders -->
<rect x="0" y="0" width="1" height="1069" fill="#2b7cbd"/>
<rect x="1811" y="0" width="1" height="1069" fill="#2b7cbd"/>
</svg>
</body></html>
